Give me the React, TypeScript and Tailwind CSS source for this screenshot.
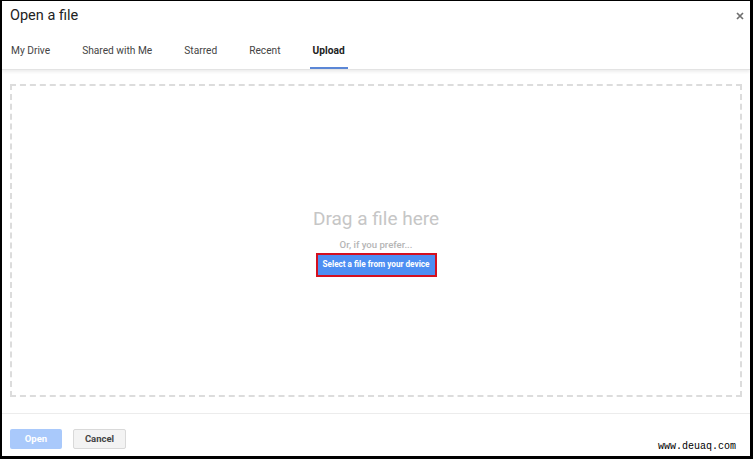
const tabs = ["My Drive", "Shared with Me", "Starred", "Recent", "Upload"];

function CloseIcon() {
  return (
    <svg className="h-[8px] w-[8px]" viewBox="0 0 8 8" fill="none" stroke="#6f6f6f" strokeWidth="1.7">
      <path d="M1 1l6 6M7 1L1 7" />
    </svg>
  );
}

export default function App() {
  return (
    <div
      className="relative flex h-[459px] w-[753px] flex-col overflow-hidden border-t border-r-[3px] border-b-[3px] border-l-2 border-black bg-white"
      style={{ fontFamily: "Roboto, Arial, sans-serif" }}
    >
      <header className="relative border-b border-[#e3e3e3] shadow-[0_2px_3px_rgba(0,0,0,0.07)]">
        <div className="h-[29px] pt-[6px] pl-[8px] text-[14.5px] leading-[17px] text-[#222]">Open a file</div>
        <button className="absolute top-[10px] right-[5px] flex h-[10px] w-[10px] items-center justify-center">
          <CloseIcon />
        </button>
        <nav className="flex h-[39px] gap-[26px] pl-[6px]">
          {tabs.map((t) => {
            const active = t === "Upload";
            return (
              <div
                key={t}
                className={
                  active
                    ? "flex items-center border-b-2 border-[#5b87d6] px-[3px] pt-[4px] text-[10.2px] font-bold text-[#222]"
                    : "flex items-center border-b-2 border-transparent px-[3px] pt-[4px] text-[10.2px] text-[#444]"
                }
              >
                {t}
              </div>
            );
          })}
        </nav>
      </header>

      <main className="flex flex-1 px-[8px] pt-[14px] pb-[16px]">
        <div className="flex flex-1 flex-col items-center justify-center border-2 border-dashed border-[#dcdcdc] pt-[3px]">
          <div className="text-[19px] leading-[22px] text-[#c6c6c6]">Drag a file here</div>
          <div className="mt-[9px] text-[9.6px] leading-[12px] font-medium text-[#b5b5b5]">Or, if you prefer...</div>
          <button className="mt-[2px] h-[24px] border-2 border-[#d4101f] bg-[#4d8ef2] px-[5px] text-[8.2px] font-bold text-white">
            Select a file from your device
          </button>
        </div>
      </main>

      <footer className="flex h-[43px] gap-[11px] border-t border-[#ececec] pt-[15px] pl-[8px]">
        <button className="h-[20px] w-[52px] rounded-[2px] bg-[#a9c9fb] text-[9.5px] font-bold text-white">Open</button>
        <button className="h-[20px] w-[53px] rounded-[2px] border border-[#d9d9d9] bg-[#f3f3f3] text-[9.5px] font-bold text-[#444]">
          Cancel
        </button>
      </footer>

      <div
        className="absolute right-[14px] bottom-[3px] text-[10px] leading-[12px] text-black"
        style={{ fontFamily: "'Liberation Mono', monospace" }}
      >
        www.deuaq.com
      </div>
    </div>
  );
}
